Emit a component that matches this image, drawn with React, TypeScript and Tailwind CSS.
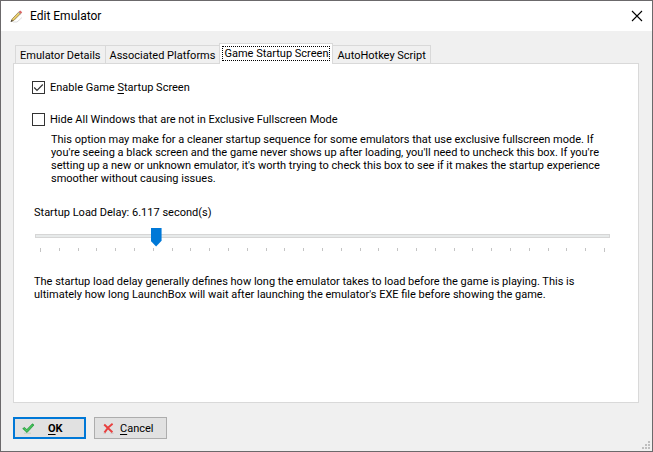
import { useState, type ReactNode } from 'react'
import clsx from 'clsx'

const tabs = ['Emulator Details', 'Associated Platforms', 'Game Startup Screen', 'AutoHotkey Script']
const MAX_DELAY = 30
const ticks = Array.from({ length: MAX_DELAY + 1 }, (_, i) => i)

function PencilIcon() {
  return (
    <svg width="13" height="13" viewBox="0 0 13 13" aria-hidden="true">
      <path d="M3 12h4l5-4.5" stroke="#dddddd" fill="none" />
      <path d="M1.3 11.3 2.3 8.8 8.9 1.9 10.7 3.6 4 10.3Z" fill="#e3c45c" stroke="#8a7440" strokeWidth="0.7" />
      <path d="M3 9.2 9.5 2.6" stroke="#f0dc8c" strokeWidth="0.7" />
      <path d="M8.8 1.7 10.2 .4 12.2 2.3 10.9 3.7Z" fill="#dc6465" />
      <path d="M8.2 2.2 10.4 4.2" stroke="#9ba3a6" />
      <path d="M.6 12 1.5 9.6 3.1 11.1Z" fill="#4b4438" />
    </svg>
  )
}

function CheckIcon() {
  return (
    <svg width="13" height="11" viewBox="0 0 13 11" aria-hidden="true">
      <path d="M2 10.2h7" stroke="#c4cec4" />
      <path d="M.7 5.6 2.6 4.4 4.8 6.6 10.4.8 12 2 5 9.6Z" fill="#32b44a" stroke="#239a3b" strokeWidth="0.7" />
      <path d="M2.4 5.6 4.8 7.8 10.4 2" stroke="#5fd070" strokeWidth="0.8" fill="none" />
    </svg>
  )
}

function CrossIcon() {
  return (
    <svg width="11" height="11" viewBox="0 0 11 11" aria-hidden="true">
      <path d="M.5 10.2h2.5M7.5 10.2h3" stroke="#c9bcbc" />
      <path d="M1.2 1.6 9.4 9.2M9.6.8C6.5 3 3.5 6 1.5 9.4" stroke="#e8403f" strokeWidth="2" fill="none" />
    </svg>
  )
}

function CheckBox({ id, defaultChecked, children }: { id: string; defaultChecked?: boolean; children: ReactNode }) {
  return (
    <div className="flex items-center gap-[5px]">
      <span className="grid size-[13px]">
        <input
          id={id}
          type="checkbox"
          defaultChecked={defaultChecked}
          className="peer col-start-1 row-start-1 size-[13px] appearance-none border border-[#333333] bg-white outline-none"
        />
        <svg
          className="pointer-events-none invisible col-start-1 row-start-1 peer-checked:visible"
          width="13"
          height="13"
          viewBox="0 0 13 13"
          aria-hidden="true"
        >
          <path d="M2.2 6.5 5 9.3 10.8 3.5" fill="none" stroke="#333333" strokeWidth="1.2" />
        </svg>
      </span>
      <label htmlFor={id} className="pt-px whitespace-nowrap">{children}</label>
    </div>
  )
}

export default function App() {
  const [active, setActive] = useState(2)
  const [delay, setDelay] = useState(6.117)

  return (
    <div className="flex min-h-screen flex-col border border-[#6b696b] bg-[#f0f0f0] font-[Roboto,sans-serif] text-[11px] leading-[13px] text-black">
      <header className="flex h-[30px] items-center bg-white px-[9px]">
        <PencilIcon />
        <h1 className="flex-1 pl-[7px] text-[12px] leading-4">Edit Emulator</h1>
        <button type="button" aria-label="Close">
          <svg width="12" height="12" viewBox="0 0 12 12" aria-hidden="true">
            <path d="M1 1 11 11M11 1 1 11" stroke="#000000" strokeWidth="1.1" />
          </svg>
        </button>
      </header>

      <main className="flex flex-1 flex-col pt-3 pr-[13px] pl-3">
        <div role="tablist" className="z-10 -mb-px flex items-end pl-[2px]">
          {tabs.map((tab, i) => (
            <button
              key={tab}
              type="button"
              role="tab"
              aria-selected={i === active}
              onClick={() => setActive(i)}
              className={clsx(
                'border-t border-r border-[#d9d9d9] whitespace-nowrap',
                i === active ? '-ml-px h-[21px] border-l bg-white px-[2px] pb-px' : 'h-[19px] border-b px-1 pt-px',
                i === 0 && i !== active && 'border-l',
              )}
            >
              <span className={clsx('block', i === active && 'border border-dotted border-black px-px')}>{tab}</span>
            </button>
          ))}
        </div>

        <section className="flex-1 border border-[#d9d9d9] bg-white pt-4 pr-7 pl-[18px]">
          <CheckBox id="startup" defaultChecked>
            Enable Game <u className="underline-offset-2">S</u>tartup Screen
          </CheckBox>
          <div className="pt-[18px]">
            <CheckBox id="hide-windows">Hide All Windows that are not in Exclusive Fullscreen Mode</CheckBox>
          </div>
          <p className="pt-[7px] pl-[19px]">
            This option may make for a cleaner startup sequence for some emulators that use exclusive fullscreen mode. If
            you're seeing a black screen and the game never shows up after loading, you'll need to uncheck this box. If you're
            setting up a new or unknown emulator, it's worth trying to check this box to see if it makes the startup experience
            smoother without causing issues.
          </p>

          <div className="pt-[21px] pl-[2px]">
            <label htmlFor="delay" className="block">Startup Load Delay: {delay} second(s)</label>
            <div className="pl-px">
              <input
                id="delay"
                type="range"
                min={0}
                max={MAX_DELAY}
                step={0.001}
                value={delay}
                onChange={(e) => setDelay(Number(e.target.value))}
                className="mt-[7px] block h-[19px] w-full appearance-none bg-transparent outline-none [&::-webkit-slider-runnable-track]:h-1 [&::-webkit-slider-runnable-track]:border [&::-webkit-slider-runnable-track]:border-[#d6d6d6] [&::-webkit-slider-runnable-track]:bg-[#e7eaea] [&::-webkit-slider-thumb]:-mt-[7px] [&::-webkit-slider-thumb]:h-[19px] [&::-webkit-slider-thumb]:w-[11px] [&::-webkit-slider-thumb]:appearance-none [&::-webkit-slider-thumb]:bg-[#0078d7] [&::-webkit-slider-thumb]:[clip-path:polygon(0_0,100%_0,100%_70%,50%_100%,0_70%)]"
              />
              <div className="mt-[3px] flex h-1 justify-between px-[5px]" aria-hidden="true">
                {ticks.map((tick) => (
                  <span key={tick} className="h-[3px] w-px bg-[#c4c4c4] first:h-1 last:h-1" />
                ))}
              </div>
            </div>
          </div>

          <p className="pt-[23px] pr-7 pl-[2px]">
            The startup load delay generally defines how long the emulator takes to load before the game is playing. This is
            ultimately how long LaunchBox will wait after launching the emulator's EXE file before showing the game.
          </p>
        </section>
      </main>

      <footer className="flex items-end justify-between pt-[14px] pl-3">
        <div className="flex gap-2 pb-3">
          <button type="button" className="flex h-[22px] w-[73px] items-center border-2 border-[#0078d7] bg-[#e1e1e1] pl-[7px]">
            <CheckIcon />
            <span className="pl-[13px] font-bold"><u className="underline-offset-2">O</u>K</span>
          </button>
          <button type="button" className="flex h-[22px] w-[73px] items-center border border-[#adadad] bg-[#e1e1e1] pl-2">
            <CrossIcon />
            <span className="pl-[6px]"><u className="underline-offset-2">C</u>ancel</span>
          </button>
        </div>
        <svg width="11" height="11" viewBox="0 0 11 11" aria-hidden="true">
          <path d="M7 1h2v2h-2zM4 4h2v2h-2zM7 4h2v2h-2zM1 7h2v2h-2zM4 7h2v2h-2zM7 7h2v2h-2z" fill="#bfbfbf" />
        </svg>
      </footer>
    </div>
  )
}
